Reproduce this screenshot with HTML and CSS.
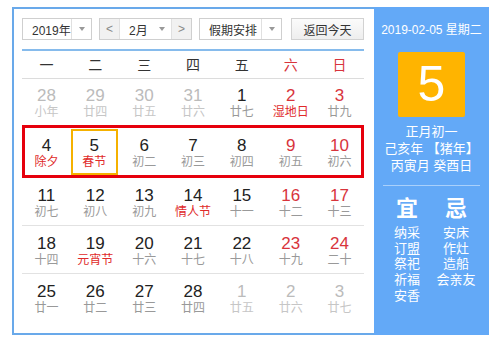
FILE: index.html
```html
<!DOCTYPE html>
<html lang="zh-CN">

<head>
    <meta charset="UTF-8">
    <meta name="viewport" content="width=device-width, initial-scale=1.0">
    <title>万年历</title>
    <link rel="stylesheet" href="styles.css">
</head>

<body>
    <div class="calendar">
        <div class="main">
            <div class="toolbar">
                <div class="select year">
                    <span class="value">2019年</span>
                    <span class="arrow"></span>
                </div>
                <div class="select month">
                    <span class="nav-btn">&lt;</span>
                    <span class="value">2月</span>
                    <span class="arrow plain"></span>
                    <span class="nav-btn next">&gt;</span>
                </div>
                <div class="select holiday">
                    <span class="value">假期安排</span>
                    <span class="arrow"></span>
                </div>
                <div class="today-btn">返回今天</div>
            </div>

            <div class="weekdays">
                <span>一</span>
                <span>二</span>
                <span>三</span>
                <span>四</span>
                <span>五</span>
                <span class="weekend">六</span>
                <span class="weekend">日</span>
            </div>

            <!-- 第一周 -->
            <div class="week first">
                <div class="day other"><span class="num">28</span><span class="lunar">小年</span></div>
                <div class="day other"><span class="num">29</span><span class="lunar">廿四</span></div>
                <div class="day other"><span class="num">30</span><span class="lunar">廿五</span></div>
                <div class="day other"><span class="num">31</span><span class="lunar">廿六</span></div>
                <div class="day"><span class="num">1</span><span class="lunar">廿七</span></div>
                <div class="day weekend"><span class="num">2</span><span class="lunar fest">湿地日</span></div>
                <div class="day weekend"><span class="num">3</span><span class="lunar">廿九</span></div>
            </div>

            <!-- 当前周 -->
            <div class="week current">
                <div class="day"><span class="num">4</span><span class="lunar fest">除夕</span></div>
                <div class="day today"><span class="num">5</span><span class="lunar fest">春节</span></div>
                <div class="day"><span class="num">6</span><span class="lunar">初二</span></div>
                <div class="day"><span class="num">7</span><span class="lunar">初三</span></div>
                <div class="day"><span class="num">8</span><span class="lunar">初四</span></div>
                <div class="day weekend"><span class="num">9</span><span class="lunar">初五</span></div>
                <div class="day weekend"><span class="num">10</span><span class="lunar">初六</span></div>
            </div>

            <div class="week">
                <div class="day"><span class="num">11</span><span class="lunar">初七</span></div>
                <div class="day"><span class="num">12</span><span class="lunar">初八</span></div>
                <div class="day"><span class="num">13</span><span class="lunar">初九</span></div>
                <div class="day"><span class="num">14</span><span class="lunar fest">情人节</span></div>
                <div class="day"><span class="num">15</span><span class="lunar">十一</span></div>
                <div class="day weekend"><span class="num">16</span><span class="lunar">十二</span></div>
                <div class="day weekend"><span class="num">17</span><span class="lunar">十三</span></div>
            </div>

            <div class="week">
                <div class="day"><span class="num">18</span><span class="lunar">十四</span></div>
                <div class="day"><span class="num">19</span><span class="lunar fest">元宵节</span></div>
                <div class="day"><span class="num">20</span><span class="lunar">十六</span></div>
                <div class="day"><span class="num">21</span><span class="lunar">十七</span></div>
                <div class="day"><span class="num">22</span><span class="lunar">十八</span></div>
                <div class="day weekend"><span class="num">23</span><span class="lunar">十九</span></div>
                <div class="day weekend"><span class="num">24</span><span class="lunar">二十</span></div>
            </div>

            <div class="week last">
                <div class="day"><span class="num">25</span><span class="lunar">廿一</span></div>
                <div class="day"><span class="num">26</span><span class="lunar">廿二</span></div>
                <div class="day"><span class="num">27</span><span class="lunar">廿三</span></div>
                <div class="day"><span class="num">28</span><span class="lunar">廿四</span></div>
                <div class="day other"><span class="num">1</span><span class="lunar">廿五</span></div>
                <div class="day other"><span class="num">2</span><span class="lunar">廿六</span></div>
                <div class="day other"><span class="num">3</span><span class="lunar">廿七</span></div>
            </div>
        </div>

        <div class="side">
            <div class="side-date">2019-02-05 星期二</div>
            <div class="big-day">5</div>
            <div class="lunar-info">
                <p>正月初一</p>
                <p>己亥年 【猪年】</p>
                <p>丙寅月 癸酉日</p>
            </div>
            <div class="yiji">
                <div class="col">
                    <h4>宜</h4>
                    <p>纳采</p>
                    <p>订盟</p>
                    <p>祭祀</p>
                    <p>祈福</p>
                    <p>安香</p>
                </div>
                <div class="col">
                    <h4>忌</h4>
                    <p>安床</p>
                    <p>作灶</p>
                    <p>造船</p>
                    <p>会亲友</p>
                </div>
            </div>
        </div>
    </div>
</body>

</html>
```

FILE: styles.css
```css
body {
    margin: 0;
    font-family: "Liberation Sans", "Noto Sans CJK SC", sans-serif;
    background: #fff;
    color: #333;
}

.calendar {
    display: flex;
    width: 477px;
    height: 328px;
    margin: 7px 0 0 12px;
}

.main {
    width: 362px;
    box-sizing: border-box;
    border: 2px solid #69a9ea;
    border-right: none;
    padding: 9px 10px 0 8px;
}

/* 顶部工具栏 */
.toolbar {
    display: flex;
    gap: 7px;
    height: 22px;
    font-size: 12px;
}

.select {
    display: flex;
    height: 22px;
    box-sizing: border-box;
    border: 1px solid #cfcfcf;
    background: #fff;
}

.select .value {
    flex: 1;
    display: flex;
    align-items: center;
    padding-left: 9px;
    color: #333;
    white-space: nowrap;
}

.select .arrow {
    width: 19px;
    flex-shrink: 0;
    border-left: 1px solid #e0e0e0;
    display: flex;
    align-items: center;
    justify-content: center;
}

.select .arrow.plain {
    border-left: none;
}

.select .arrow::after {
    content: "";
    border-left: 3px solid transparent;
    border-right: 3px solid transparent;
    border-top: 4px solid #999;
}

.year {
    width: 70px;
}

.year .value {
    padding-left: 9px;
}

.month {
    width: 93px;
}

.nav-btn {
    width: 19px;
    flex-shrink: 0;
    display: flex;
    align-items: center;
    justify-content: center;
    background: #f1f1f1;
    color: #888;
    border-right: 1px solid #e0e0e0;
}

.nav-btn.next {
    border-right: none;
    border-left: 1px solid #e0e0e0;
}

.holiday {
    width: 83px;
}

.today-btn {
    width: 73px;
    height: 22px;
    box-sizing: border-box;
    margin-left: 2px;
    border: 1px solid #d2d2d2;
    background: linear-gradient(#fbfbfb, #eeeeee);
    display: flex;
    align-items: center;
    justify-content: center;
    color: #333;
}

/* 星期表头 */
.weekdays {
    display: grid;
    grid-template-columns: repeat(7, 1fr);
    margin-top: 9px;
    border-top: 2px solid #86bbec;
    border-bottom: 1px solid #dcdcdc;
    height: 30px;
    box-sizing: border-box;
    line-height: 28px;
    font-size: 14px;
    text-align: center;
    color: #333;
}

.weekdays .weekend {
    color: #d8343c;
}

/* 日期行 */
.week {
    display: grid;
    grid-template-columns: repeat(7, 1fr);
    height: 48px;
    box-sizing: border-box;
    border-bottom: 1px solid #e2e2e2;
}

.week.first {
    height: 46px;
    border-bottom: none;
}

.week.last {
    border-bottom: none;
}

.week.current {
    height: 53px;
    border-bottom: none;
    outline: 3px solid #e6000c;
    outline-offset: -3px;
}

.day {
    display: flex;
    flex-direction: column;
    align-items: center;
    padding-top: 8px;
}

.week.first .day {
    padding-top: 7px;
}

.week.current .day {
    padding-top: 11px;
}

.num {
    font-size: 17px;
    line-height: 19px;
    color: #222;
}

.lunar {
    font-size: 12px;
    line-height: 15px;
    color: #999;
}

.day.weekend .num {
    color: #d8343c;
}

.lunar.fest {
    color: #e02a2a;
}

.day.other .num {
    color: #bbb;
}

.day.other .lunar {
    color: #c6c6c6;
}

.week.current .day.today {
    height: 46px;
    box-sizing: border-box;
    margin: 4px 2px 0 0;
    padding-top: 5px;
    border: 2px solid #f5b100;
}

/* 右侧面板 */
.side {
    width: 115px;
    background: #63a9f7;
    color: #fff;
    text-align: center;
    padding-top: 15px;
    box-sizing: border-box;
}

.side-date {
    font-size: 12px;
    line-height: 16px;
}

.big-day {
    width: 67px;
    height: 65px;
    margin: 14px auto 0;
    background: #ffb400;
    border-radius: 2px;
    font-size: 50px;
    line-height: 65px;
    color: #fff;
}

.lunar-info {
    margin: 6px 9px 0;
    padding-bottom: 11px;
    border-bottom: 1px solid rgba(255, 255, 255, 0.45);
}

.lunar-info p {
    margin: 0;
    font-size: 13px;
    line-height: 17px;
}

.yiji {
    display: flex;
    justify-content: center;
    margin-top: 10px;
}

.yiji .col {
    width: 49px;
}

.yiji h4 {
    margin: 0 0 3px;
    font-size: 22px;
    line-height: 26px;
    font-weight: bold;
}

.yiji p {
    margin: 0;
    font-size: 13px;
    line-height: 15.7px;
    white-space: nowrap;
}
```
